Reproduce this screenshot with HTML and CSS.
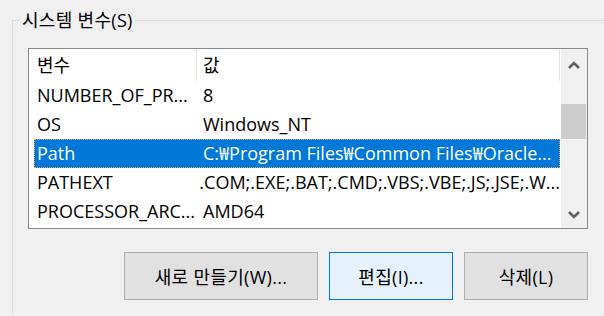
FILE: index.html
```html
<!DOCTYPE html>
<html lang="ko">
<head>
<meta charset="utf-8">
<link rel="stylesheet" href="styles.css">
</head>
<body>
<div class="group">
  <div class="group-title">시스템 변수(S)</div>
  <div class="listbox">
    <div class="list">
      <div class="header">
        <div class="hcell hcell-name">변수</div>
        <div class="hcell hcell-value">값</div>
      </div>
      <div class="row"><div class="cell-name">NUMBER_OF_PR...</div><div class="cell-value">8</div></div>
      <div class="row"><div class="cell-name">OS</div><div class="cell-value">Windows_NT</div></div>
      <div class="row selected"><div class="cell-name">Path</div><div class="cell-value">C:₩Program Files₩Common Files₩Oracle...</div></div>
      <div class="row"><div class="cell-name">PATHEXT</div><div class="cell-value">.COM;.EXE;.BAT;.CMD;.VBS;.VBE;.JS;.JSE;.W...</div></div>
      <div class="row"><div class="cell-name">PROCESSOR_ARC...</div><div class="cell-value">AMD64</div></div>
    </div>
    <div class="scrollbar">
      <div class="sb-btn sb-up">
        <svg width="12" height="10" viewBox="0 0 12 10"><path d="M1 8 L6 3 L11 8" fill="none" stroke="#606060" stroke-width="2.6"/></svg>
      </div>
      <div class="sb-track"><div class="sb-thumb"></div></div>
      <div class="sb-btn sb-down">
        <svg width="12" height="10" viewBox="0 0 12 10"><path d="M1 2 L6 7 L11 2" fill="none" stroke="#606060" stroke-width="2.6"/></svg>
      </div>
    </div>
  </div>
  <div class="buttons">
    <div class="btn btn-new">새로 만들기(W)...</div>
    <div class="btn btn-edit">편집(I)...</div>
    <div class="btn btn-del">삭제(L)</div>
  </div>
</div>
</body>
</html>
```

FILE: styles.css
```css
html, body {
  margin: 0;
  padding: 0;
}
body {
  width: 604px;
  height: 316px;
  overflow: hidden;
  background: #f0f0f0;
  color: #000;
  font-family: "Open Sans", "Noto Sans CJK KR", sans-serif;
  font-size: 18px;
}
.group {
  margin: 20px 0 0 12px;
  border-top: 1px solid #dcdcdc;
  border-left: 1px solid #dcdcdc;
  height: 295px;
  padding-left: 15px;
  box-sizing: border-box;
}
.group-title {
  margin: -13px 0 0 -8px;
  padding: 0 2px;
  width: max-content;
  background: #f0f0f0;
  line-height: 24px;
  height: 24px;
  letter-spacing: 0.3px;
}
.listbox {
  margin-top: 16px;
  width: 560px;
  height: 181px;
  box-sizing: border-box;
  border: 1px solid #828790;
  background: #fff;
  display: flex;
}
.list {
  flex: 1;
  overflow: hidden;
}
.header {
  display: flex;
  height: 32px;
  line-height: 32px;
}
.hcell {
  box-sizing: border-box;
  border-right: 1px solid #e5e5e5;
  margin-top: 1px;
  height: 31px;
  line-height: 30px;
}
.hcell-name {
  width: 168px;
  padding-left: 8px;
}
.hcell-value {
  width: 363px;
  padding-left: 6px;
}
.row {
  display: flex;
  height: 29px;
  line-height: 29px;
  margin-left: 5px;
  width: 526px;
  box-sizing: border-box;
  white-space: nowrap;
}
.cell-name {
  width: 169px;
  padding-left: 3px;
  box-sizing: border-box;
}
.cell-value {
  flex: 1;
}
.row.selected {
  background: #0078d7;
  color: #fff;
  outline: 1px dotted #e0a050;
  outline-offset: -1px;
}
.scrollbar {
  width: 26px;
  background: #f0f0f0;
  display: flex;
  flex-direction: column;
}
.sb-btn {
  display: flex;
  align-items: center;
  justify-content: center;
}
.sb-up {
  height: 31px;
}
.sb-down {
  height: 27px;
}
.sb-track {
  flex: 1;
}
.sb-thumb {
  margin: 24px 1px 0 0;
  width: 25px;
  height: 35px;
  background: #cdcdcd;
}
.buttons {
  width: 560px;
  margin-top: 23px;
  display: flex;
  justify-content: flex-end;
  gap: 11px;
}
.btn {
  box-sizing: border-box;
  height: 48px;
  border: 1px solid #adadad;
  background: #e1e1e1;
  display: flex;
  align-items: center;
  justify-content: center;
  letter-spacing: 0.3px;
}
.btn-new {
  width: 194px;
}
.btn-edit,
.btn-del {
  width: 124px;
}
.btn-edit {
  border-color: #0078d7;
  background: #e5f1fb;
}
```
